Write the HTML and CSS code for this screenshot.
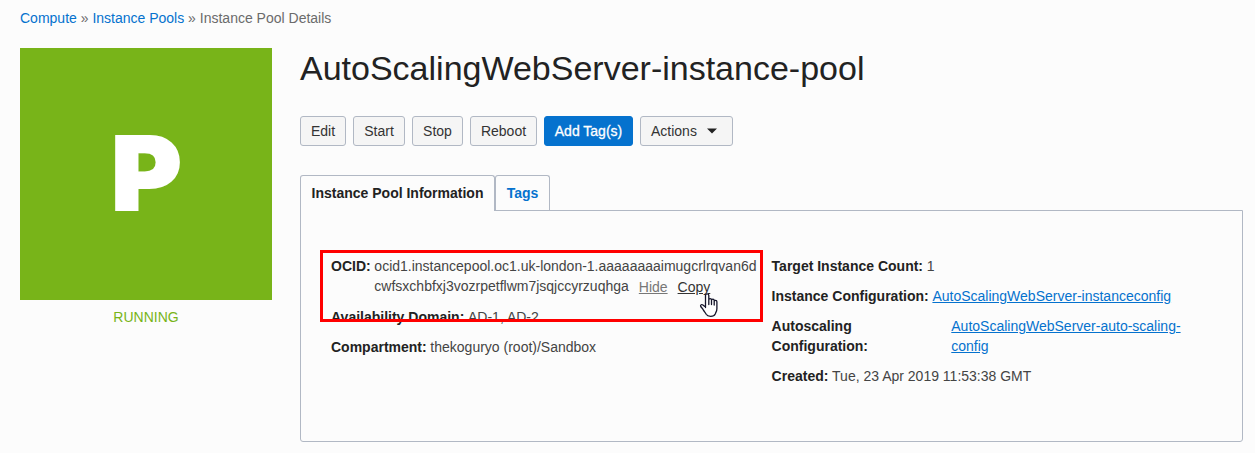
FILE: index.html
```html
<!DOCTYPE html>
<html lang="en">
<head>
<meta charset="utf-8">
<title>Instance Pool Details</title>
<link rel="stylesheet" href="styles.css">
</head>
<body>
<nav class="crumbs"><a href="#">Compute</a> » <a href="#">Instance Pools</a> » Instance Pool Details</nav>
<div class="layout">
  <aside class="status">
    <div class="tile"><span class="letter">P</span></div>
    <div class="state">RUNNING</div>
  </aside>
  <main class="main">
    <h1 class="title">AutoScalingWebServer-instance-pool</h1>
    <div class="actions">
      <button class="btn w-edit">Edit</button>
      <button class="btn w-start">Start</button>
      <button class="btn w-stop">Stop</button>
      <button class="btn w-reboot">Reboot</button>
      <button class="btn primary w-tag">Add Tag(s)</button>
      <button class="btn w-actions">Actions<svg class="caret" width="10" height="6" viewBox="0 0 10 6"><path d="M0 .4h10L5 5.6z" fill="#222"/></svg></button>
    </div>
    <div class="tabs">
      <div class="tab active">Instance Pool Information</div>
      <div class="tab second">Tags</div>
    </div>
    <section class="panel">
      <div class="column left">
        <div class="row ocid"><b>OCID:</b><span class="value">ocid1.instancepool.oc1.uk-london-1.aaaaaaaaimugcrlrqvan6d<br>cwfsxchbfxj3vozrpetflwm7jsqjccyrzuqhga<span class="links"><a class="hide" href="#">Hide</a><a class="copy" href="#">Copy</a></span></span></div>
        <div class="row"><b>Availability Domain:</b><span class="value">AD-1, AD-2</span></div>
        <div class="row"><b>Compartment:</b><span class="value">thekoguryo (root)/Sandbox</span></div>
      </div>
      <div class="column right">
        <div class="row"><b>Target Instance Count:</b><span class="value">1</span></div>
        <div class="row"><b>Instance Configuration:</b><a class="value" href="#">AutoScalingWebServer-instanceconfig</a></div>
        <div class="row"><b class="wide">Autoscaling Configuration:</b><a class="value" href="#">AutoScalingWebServer-auto-scaling-<br>config</a></div>
        <div class="row"><b>Created:</b><span class="value">Tue, 23 Apr 2019 11:53:38 GMT</span></div>
      </div>
      <div class="highlight"></div>
      <svg class="pointer" width="19" height="25" viewBox="0 0 19 25"><path d="M6.500 14.500V2.500c0-2.300 3.300-2.300 3.300 0V11.500 6.800c0-1.600 2.700-1.600 2.700 0V11.500 7.300c0-1.500 2.700-1.500 2.700 0v4.700-3.500c0-1.500 2.700-1.400 2.700.3v7c0 2.700-1.400 3.900-1.700 5.200-1.300 3-7.500 3-9 .2-.8-1.700-2-2.700-2.900-4.300-.8-1.600-2-2.400-2.600-3.500-.7-1.700 1.200-2.300 2.300-1.300.9.700 1.700 1.500 2.500 1.900z" fill="#fff" stroke="#15152a" stroke-width="1.300" stroke-linejoin="round"/></svg>
    </section>
  </main>
</div>
</body>
</html>
```

FILE: styles.css
```css
* { box-sizing: border-box; }
body {
  margin: 0;
  height: 453px;
  padding: 8px 12px 0 20px;
  overflow: hidden;
  background: #fcfcfc;
  color: #444;
  font: 14px/20px "Liberation Sans", Arial, sans-serif;
}
a { color: #0572ce; }
b { color: #222; flex: none; }
.crumbs { height: 40px; color: #6b6b6b; }
.crumbs a { text-decoration: none; }
.layout { display: flex; gap: 28px; }
.status { width: 252px; flex: none; }
.tile {
  height: 252px;
  background: #78b419;
  color: #fff;
  display: flex;
  align-items: center;
  justify-content: center;
}
.letter {
  font: 900 102px/250px Inter, sans-serif;
  padding-bottom: 2px;
  -webkit-text-stroke: 2px #fff;
  transform: scaleX(1.05);
}
.state { padding-top: 7px; text-align: center; color: #78b419; }
.main { flex: 1; min-width: 0; }
.title { margin: 0; height: 68px; font-size: 34px; line-height: 40px; font-weight: 400; color: #222; }
.actions { display: flex; gap: 7px; height: 59px; }
.btn {
  height: 30px;
  padding: 0;
  border: 1px solid #b1b8c4;
  border-radius: 3px;
  background: #f5f5f5;
  color: #333;
  font: inherit;
}
.primary { background: #0572ce; border-color: #0572ce; color: #fff; -webkit-text-stroke: .3px #fff; }
.w-edit { width: 46px; }
.w-start { width: 52px; }
.w-stop { width: 51px; }
.w-reboot { width: 67px; }
.w-tag { width: 89px; }
.w-actions { width: 93px; padding-left: 10px; text-align: left; }
.caret { margin-left: 10px; vertical-align: 2px; }
.tabs { display: flex; height: 35px; }
.tab {
  height: 35px;
  border: 1px solid #b1b8c4;
  border-bottom: 0;
  border-radius: 3px 3px 0 0;
  padding-top: 7px;
  text-align: center;
  font-weight: 700;
  color: #0572ce;
}
.active { width: 195px; height: 36px; background: #fcfcfc; color: #222; position: relative; z-index: 1; }
.second { width: 55px; }
.panel {
  position: relative;
  display: flex;
  height: 232px;
  padding: 45px 0 0 30px;
  border: 1px solid #b1b8c4;
  border-radius: 0 0 3px 3px;
}
.column { display: flex; flex-direction: column; gap: 10px; }
.left { width: 440.6px; flex: none; }
.row { display: flex; gap: 3.7px; white-space: nowrap; }
.ocid { height: 41px; }
.links { display: inline-block; vertical-align: -1px; }
.wide { width: 176px; white-space: normal; padding-right: 60px; }
.hide, .copy { margin-left: 10px; }
.hide { color: #777; }
.copy { color: #333; }
.highlight {
  position: absolute;
  left: 19px;
  top: 39px;
  width: 443px;
  height: 72px;
  border: 3px solid #f00;
}
.pointer { position: absolute; left: 398px; top: 82px; }
```
